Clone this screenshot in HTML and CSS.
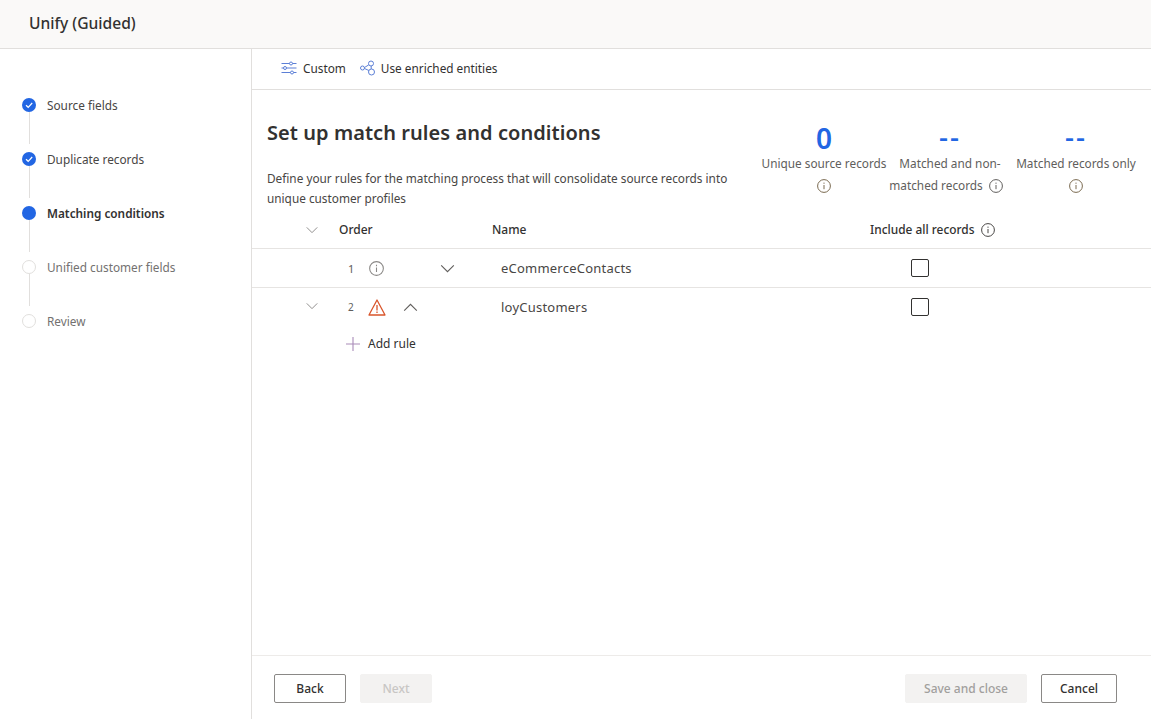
FILE: index.html
```html
<!DOCTYPE html>
<html lang="en">
<head>
<meta charset="utf-8">
<title>Unify (Guided)</title>
<link rel="stylesheet" href="styles.css">
</head>
<body>
<svg class="defs" width="0" height="0" aria-hidden="true">
  <symbol id="info" viewBox="0 0 14 14"><circle cx="7" cy="7" r="6.4" fill="none" stroke="currentColor" stroke-width="1"/><path d="M7 6v4.2M7 3.6v1.2" fill="none" stroke="currentColor" stroke-width="1"/></symbol>
  <symbol id="down" viewBox="0 0 16 10"><path d="M1 1.5l7 7 7-7" fill="none" stroke="currentColor" stroke-width="1.25"/></symbol>
  <symbol id="up" viewBox="0 0 16 10"><path d="M1 8.5l7-7 7 7" fill="none" stroke="currentColor" stroke-width="1.25"/></symbol>
</svg>
<header class="topbar"><h1 class="app-title">Unify (Guided)</h1></header>
<div class="shell">
  <nav class="steps">
    <div class="step done"><span class="dot"><svg viewBox="0 0 14 14" width="14" height="14"><path d="M4 7.2l2.2 2.1L10.2 5" fill="none" stroke="#fff" stroke-width="1.2"/></svg></span><span class="step-label">Source fields</span></div>
    <div class="step done"><span class="dot"><svg viewBox="0 0 14 14" width="14" height="14"><path d="M4 7.2l2.2 2.1L10.2 5" fill="none" stroke="#fff" stroke-width="1.2"/></svg></span><span class="step-label">Duplicate records</span></div>
    <div class="step current"><span class="dot"></span><span class="step-label">Matching conditions</span></div>
    <div class="step todo"><span class="dot"></span><span class="step-label">Unified customer fields</span></div>
    <div class="step todo last"><span class="dot"></span><span class="step-label">Review</span></div>
  </nav>
  <main class="main">
    <div class="toolbar">
      <span class="tool">
        <svg class="tool-icon" viewBox="0 0 16 14" width="16" height="14"><g fill="none" stroke="#5c7fd6" stroke-width="1"><path d="M0.5 2.5h8M11.5 2.5h4M0.5 7h2M5.5 7h10M0.5 11.5h9M12.5 11.5h3"/><circle cx="10" cy="2.5" r="1.5"/><circle cx="4" cy="7" r="1.5"/><circle cx="11" cy="11.5" r="1.5"/></g></svg>
        Custom
      </span>
      <span class="tool">
        <svg class="tool-icon" viewBox="0 0 15 16" width="15" height="16"><g fill="none" stroke="#5c7fd6" stroke-width="1"><circle cx="2.5" cy="8" r="2"/><circle cx="11" cy="3.5" r="2.5"/><circle cx="11.5" cy="12" r="3"/><path d="M4.5 7.5l4.2-2.6M4.5 8.5l4.4 2M11.2 6v3"/></g></svg>
        Use enriched entities
      </span>
    </div>
    <div class="content">
      <section class="intro">
        <div class="intro-text">
          <h2 class="heading">Set up match rules and conditions</h2>
          <p class="desc">Define your rules for the matching process that will consolidate source records into unique customer profiles</p>
        </div>
        <div class="stats">
          <div class="stat"><div class="stat-value">0</div><div class="stat-label">Unique source records<br><svg class="i-info" width="14" height="14"><use href="#info"/></svg></div></div>
          <div class="stat"><div class="stat-value dash">--</div><div class="stat-label">Matched and non-<br>matched records<svg class="i-info after" width="14" height="14"><use href="#info"/></svg></div></div>
          <div class="stat"><div class="stat-value dash">--</div><div class="stat-label">Matched records only<br><svg class="i-info" width="14" height="14"><use href="#info"/></svg></div></div>
        </div>
      </section>
      <div class="row head">
        <svg class="chev small" width="12" height="8"><use href="#down"/></svg>
        <span class="order-title">Order</span>
        <span></span>
        <span class="name-title">Name</span>
        <span class="include-title">Include all records <svg class="i-info dark" width="14" height="14"><use href="#info"/></svg></span>
      </div>
      <div class="row item">
        <span></span>
        <span class="order-cell"><span class="num">1</span><svg class="i-info grey" width="15" height="15"><use href="#info"/></svg></span>
        <svg class="chev move" width="15" height="9"><use href="#down"/></svg>
        <span class="name-cell">eCommerceContacts</span>
        <span class="box"></span>
      </div>
      <div class="row item plain">
        <svg class="chev small" width="12" height="8"><use href="#down"/></svg>
        <span class="order-cell"><span class="num tiny">2</span><svg class="warn" viewBox="0 0 18 17" width="18" height="17"><path d="M9 1L17 16H1z" fill="none" stroke="#d9552b" stroke-width="1.3" stroke-linejoin="round"/><path d="M9 6v5.5M9 12.6v1.3" fill="none" stroke="#d9552b" stroke-width="1.3"/></svg><svg class="chev near" width="15" height="9"><use href="#up"/></svg></span>
        <span></span>
        <span class="name-cell">loyCustomers</span>
        <span class="box"></span>
      </div>
      <div class="add-rule">
        <svg viewBox="0 0 14 14" width="14" height="14"><path d="M7 0v14M0 7h14" stroke="#a98bb8" stroke-width="1.1" fill="none"/></svg>
        Add rule
      </div>
    </div>
    <footer class="footer">
      <div class="group">
        <button class="btn" type="button">Back</button>
        <button class="btn off" type="button" disabled>Next</button>
      </div>
      <div class="group tight">
        <button class="btn off wide" type="button" disabled>Save and close</button>
        <button class="btn mid" type="button">Cancel</button>
      </div>
    </footer>
  </main>
</div>
</body>
</html>
```
FILE: styles.css
```css
* { box-sizing: border-box; }
html, body { height: 100%; }
body {
  margin: 0;
  font-family: "Noto Sans", "Open Sans", sans-serif;
  color: #323130;
  background: #fff;
  display: flex;
  flex-direction: column;
  overflow: hidden;
}
.defs { position: absolute; }
.topbar {
  height: 49px;
  flex: none;
  background: #faf9f8;
  border-bottom: 1px solid #e1dfdd;
  display: flex;
  align-items: center;
  padding-left: 29px;
}
.app-title { margin: 0 0 2px; font-size: 15.6px; font-weight: 500; color: #323130; }
.shell { flex: 1; display: flex; min-height: 0; }
.steps {
  width: 252px;
  flex: none;
  border-right: 1px solid #e1dfdd;
  padding: 47px 0 0 22px;
}
.step {
  height: 54px;
  display: flex;
  align-items: flex-start;
  gap: 11px;
  font-size: 11.8px;
  line-height: 18px;
  position: relative;
}
.step::after {
  content: "";
  position: absolute;
  left: 7px;
  top: 16px;
  height: 32px;
  width: 1px;
  background: #e1dfdd;
}
.step.last::after { display: none; }
.dot { width: 14px; height: 14px; border-radius: 50%; flex: none; margin-top: 2px; display: block; }
.dot svg { display: block; }
.done .dot, .current .dot { background: #2266e3; }
.todo .dot { border: 1px solid #e1dfdd; background: #fff; }
.step-label { color: #484644; }
.current .step-label { font-weight: 600; color: #323130; }
.todo .step-label { color: #737170; }
.main { flex: 1; min-width: 0; display: flex; flex-direction: column; }
.toolbar {
  height: 41px;
  flex: none;
  border-bottom: 1px solid #e1dfdd;
  display: flex;
  align-items: center;
  gap: 14px;
  padding: 0 0 3px 29px;
  font-size: 11.8px;
}
.tool { display: inline-flex; align-items: center; gap: 6px; color: #323130; }
.content { flex: 1; min-height: 0; }
.intro { display: flex; justify-content: space-between; height: 119px; padding: 29px 12px 0 15px; }
.intro-text { width: 470px; }
.heading { margin: 0; font-size: 20px; line-height: 28px; font-weight: 600; letter-spacing: .06px; color: #323130; }
.desc { margin: 21px 0 0; font-size: 11.8px; line-height: 20px; color: #484644; }
.stats { display: flex; }
.stat { width: 126px; text-align: center; }
.stat-value { font-size: 28px; line-height: 38px; font-weight: 600; color: #2266e3; height: 33px; }
.stat-value.dash { font-weight: 500; letter-spacing: 2px; line-height: 34px; }
.stat-label { font-size: 11.8px; line-height: 22px; color: #605e5c; white-space: nowrap; }
.i-info { vertical-align: -3px; color: #7a6a50; }
.i-info.after { margin: 0 8px 0 6px; color: #605e5c; }
.i-info.dark { color: #484644; margin-left: 3px; }
.i-info.grey { color: #8a8886; margin-left: 1px; }
.row {
  display: grid;
  grid-template-columns: 87px 101px 52px 378px 1fr;
  align-items: center;
  height: 39px;
  border-bottom: 1px solid #e6e4e2;
  font-size: 12px;
}
.row.head { height: 40px; padding-top: 2px; color: #323130; }
.row.plain { border-bottom: 0; padding-bottom: 1px; }
.chev { display: block; }
.chev.small { margin-left: 54px; color: #8a8886; grid-column: 1; }
.row.plain .chev.small { margin-bottom: 2px; }
.chev.move { color: #605e5c; }
.chev.near { color: #605e5c; margin-left: 4px; }
.order-title { font-weight: 500; }
.name-title { font-weight: 500; }
.include-title { font-weight: 500; font-size: 11.9px; margin-bottom: 2px; }
.order-cell { display: flex; align-items: center; gap: 13px; padding-left: 9px; }
.num { width: 7px; font-size: 11px; color: #605e5c; }
.num.tiny { font-size: 10px; }
.warn { display: block; }
.name-cell { padding-left: 9px; font-size: 13px; letter-spacing: .22px; color: #484644; }
.box { width: 18px; height: 18px; border: 1px solid #323130; border-radius: 2px; margin-left: 41px; }
.add-rule { display: flex; align-items: center; gap: 8px; padding: 8px 0 0 94px; font-size: 12px; line-height: 18px; }
.footer {
  height: 64px;
  flex: none;
  border-top: 1px solid #edebe9;
  display: flex;
  justify-content: space-between;
  padding: 18px 34px 0 22px;
}
.group { display: flex; gap: 14px; }
.btn {
  width: 72px;
  height: 29px;
  font: inherit;
  font-size: 12px;
  font-weight: 500;
  background: #fff;
  border: 1px solid #8a8886;
  border-radius: 2px;
  color: #323130;
  padding: 0;
}
.btn.off { background: #f3f2f1; border-color: #f3f2f1; color: #c8c6c4; }
.btn.wide { width: 122px; color: #a19f9d; }
.btn.mid { width: 76px; }
```
